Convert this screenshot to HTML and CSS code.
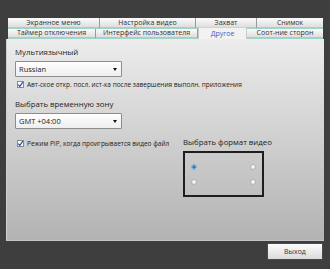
FILE: index.html
```html
<!DOCTYPE html>
<html lang="ru">
<head>
<meta charset="utf-8">
<link rel="stylesheet" href="styles.css">
</head>
<body>
<div class="window">
  <div class="tabs">
    <div class="tab-row row1">
      <div class="tab w92">Экранное меню</div>
      <div class="tab w96">Настройка видео</div>
      <div class="tab w61">Захват</div>
      <div class="tab w66 last">Снимок</div>
    </div>
    <div class="tab-row row2">
      <div class="tab w88">Таймер отключения</div>
      <div class="tab w102">Интерфейс пользователя</div>
      <div class="tab w49 active">Другое</div>
      <div class="tab w76 last">Соот-ние сторон</div>
    </div>
  </div>
  <div class="panel">
    <div class="label">Мультиязычный</div>
    <div class="select"><span>Russian</span><i class="arrow"></i></div>
    <div class="check"><span class="box"><svg viewBox="0 0 7 7" width="7" height="7"><path d="M1.3 3.6 L2.8 5.4 L5.8 1.2" fill="none" stroke="#2a4fb0" stroke-width="1.2"/></svg></span>Авт-ское откр. посл. ист-ка после завершения выполн. приложения</div>
    <div class="label l2">Выбрать временную зону</div>
    <div class="select"><span>GMT +04:00</span><i class="arrow"></i></div>
    <div class="lower">
      <div class="check pip"><span class="box"><svg viewBox="0 0 7 7" width="7" height="7"><path d="M1.3 3.6 L2.8 5.4 L5.8 1.2" fill="none" stroke="#2a4fb0" stroke-width="1.2"/></svg></span>Режим PIP, когда проигрывается видео файл</div>
      <div class="format">
        <div class="label">Выбрать формат видео</div>
        <div class="fbox">
          <span class="radio on"></span><span class="radio"></span>
          <span class="radio"></span><span class="radio"></span>
        </div>
      </div>
    </div>
  </div>
  <div class="footer">
    <div class="button">Выход</div>
  </div>
</div>
</body>
</html>
```
FILE: styles.css
```css
html, body {
  margin: 0;
  padding: 0;
}
body {
  width: 330px;
  height: 269px;
  overflow: hidden;
  background: #3e3e3e;
  font-family: "Open Sans", "DejaVu Sans", sans-serif;
  color: #222;
}
.window {
  padding: 18px 6px 0 6px;
}
.tabs {
  margin: 0 1px 0 2px;
}
.tab-row {
  display: flex;
}
.row1 { height: 11px; }
.row2 { height: 10px; }
.tab {
  box-sizing: border-box;
  height: 100%;
  font-size: 7px;
  line-height: 9px;
  text-align: center;
  white-space: nowrap;
  overflow: hidden;
  color: #333;
  background: linear-gradient(#fbfbfb, #dedede);
  border-right: 1px solid #9a9a9a;
  border-bottom: 2px solid #9fd4ca;
}
.tab.last { border-right: none; }
.row2 .tab { line-height: 8px; }
.tab.active {
  margin-top: -2px;
  height: 12px;
  line-height: 11px;
  background: #f2f2f2;
  color: #3a62c4;
  border-bottom: none;
  border-left: 1px solid #c8c8c8;
  border-right: 1px solid #c8c8c8;
  border-top: 1px solid #b8dcd6;
}
.w92 { width: 92px; }
.w96 { width: 96px; }
.w61 { width: 61px; }
.w66 { width: 66px; }
.w88 { width: 88px; }
.w102 { width: 102px; }
.w49 { width: 49px; }
.w76 { width: 76px; }

.panel {
  box-sizing: border-box;
  height: 202px;
  width: 318px;
  padding: 7px 8px 0 8px;
  background: linear-gradient(#ececec, #b3b3b3);
  border-left: 1px solid #d0d0d0;
  border-bottom: 1px solid #c4c4c4;
}
.label {
  font-size: 7.8px;
  line-height: 12px;
  color: #222;
  white-space: nowrap;
}
.l2 { margin-top: 9px; }
.select {
  box-sizing: border-box;
  margin-top: 3px;
  width: 107px;
  height: 16px;
  border: 1px solid #8c8c8c;
  border-radius: 1px;
  background: linear-gradient(#ffffff, #eeeeee);
  display: flex;
  align-items: center;
  justify-content: space-between;
  padding: 0 4px 0 3px;
  font-size: 7.5px;
  color: #222;
}
.arrow {
  width: 0;
  height: 0;
  border-left: 2px solid transparent;
  border-right: 2px solid transparent;
  border-top: 3px solid #111;
}
.check {
  display: flex;
  align-items: center;
  margin-top: 3px;
  margin-left: 2px;
  font-size: 6.5px;
  line-height: 9px;
  white-space: nowrap;
  color: #222;
}
.box {
  box-sizing: border-box;
  width: 7px;
  height: 7px;
  border: 1px solid #8a8a8a;
  background: #fff;
  margin-right: 3px;
  display: flex;
  align-items: center;
  justify-content: center;
}
.box svg { display: block; margin: -1px; }
.lower {
  display: flex;
  margin-top: 10px;
}
.check.pip {
  margin-top: 0;
  align-self: flex-start;
  width: 163px;
}
.format {
  margin-left: 3px;
  margin-top: -3px;
}
.fbox {
  box-sizing: border-box;
  margin-top: 3px;
  width: 81px;
  height: 46px;
  border: 2px solid #1e1e1e;
  display: grid;
  grid-template-columns: 1fr 1fr;
  grid-template-rows: 1fr 1fr;
  padding: 6px 6px;
  align-items: center;
}
.radio {
  width: 6px;
  height: 6px;
  border-radius: 50%;
  box-sizing: border-box;
  border: 1px solid #b4b4b4;
  background: radial-gradient(circle at 50% 40%, #ffffff, #dcdcdc);
}
.radio:nth-child(2n) { justify-self: end; }
.radio.on {
  background: radial-gradient(circle, #1f6fc0 0, #2f86d8 1.5px, #e6eef6 2px);
  border-color: #8fa8c0;
}
.footer {
  display: flex;
  justify-content: flex-end;
  padding: 2px 1px 0 0;
}
.button {
  box-sizing: border-box;
  width: 56px;
  height: 17px;
  border: 1px solid #4a4a4a;
  background: linear-gradient(#fdfdfd, #dadada);
  font-size: 7px;
  line-height: 15px;
  text-align: center;
  color: #333;
}
```
